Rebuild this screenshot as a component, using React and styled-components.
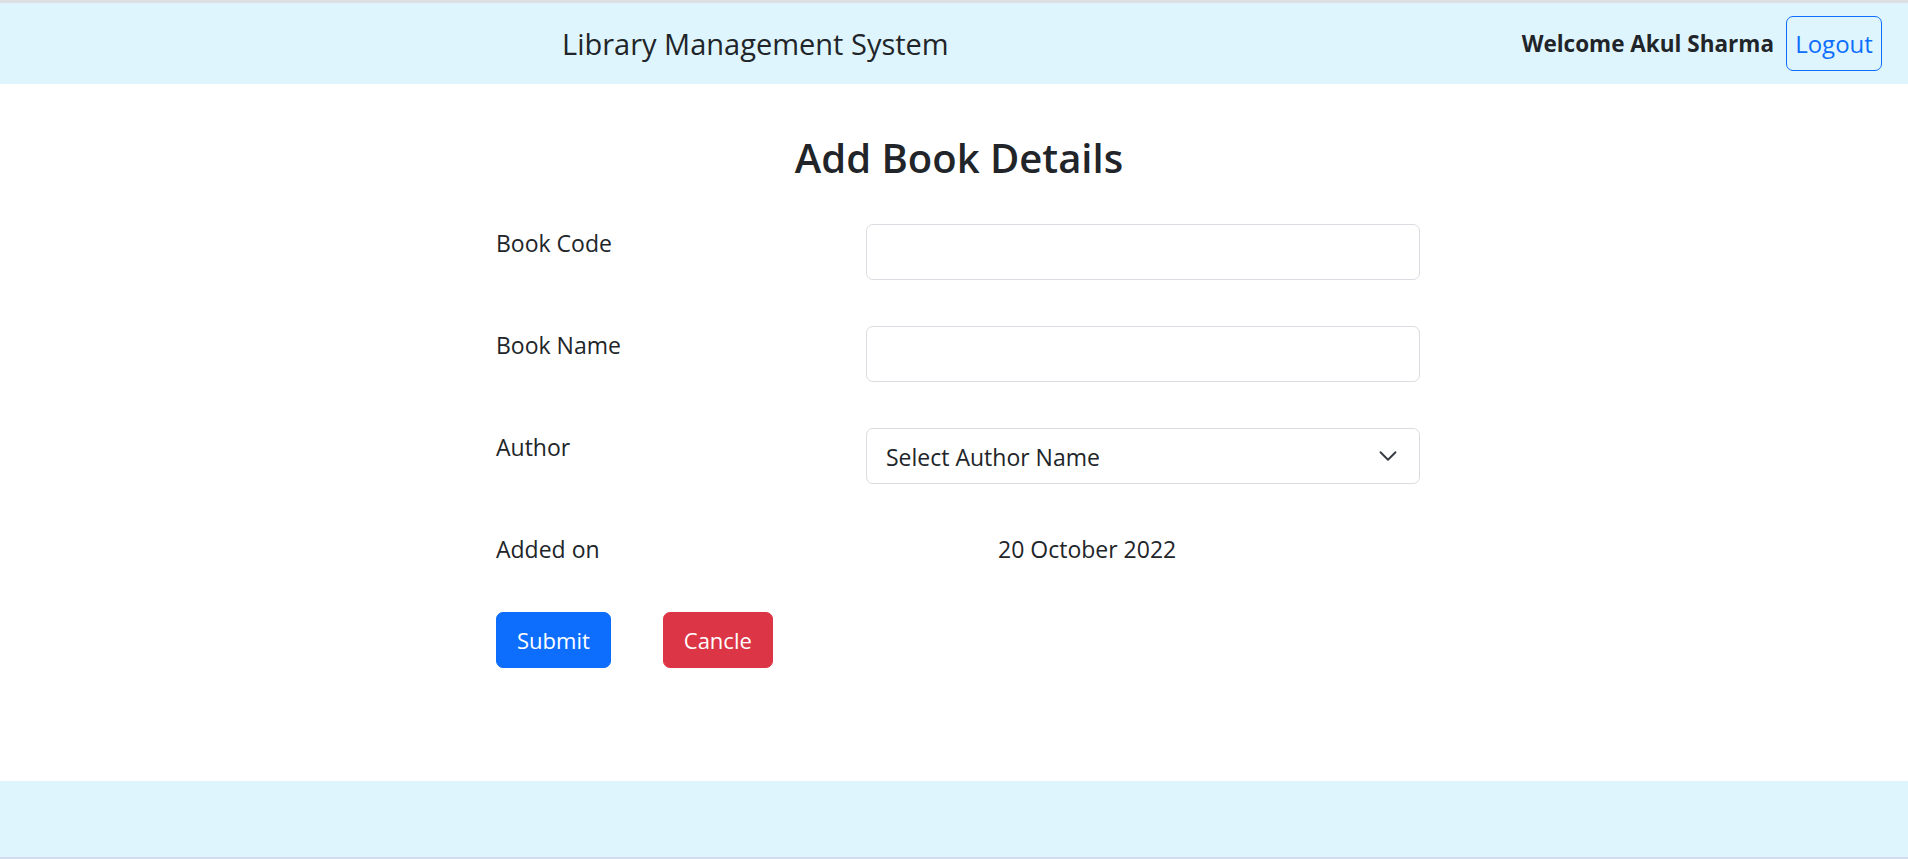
import { createGlobalStyle, styled } from 'styled-components';

const GlobalStyle = createGlobalStyle`
  * {
    box-sizing: border-box;
  }

  body {
    margin: 0;
    font-family: 'Open Sans', 'Noto Sans', sans-serif;
    color: #212529;
    background: #fff;
  }
`;

function Chevron() {
  return (
    <svg width="20" height="20" viewBox="0 0 16 16" fill="none">
      <path
        d="m2 5 6 6 6-6"
        stroke="#343a40"
        strokeWidth="1.5"
        strokeLinecap="round"
        strokeLinejoin="round"
      />
    </svg>
  );
}

function App() {
  const fields = [
    { id: 'code', label: 'Book Code' },
    { id: 'name', label: 'Book Name' },
  ];

  return (
    <Page>
      <GlobalStyle />
      <Header>
        <Brand>Library Management System</Brand>
        <UserArea>
          <Welcome>Welcome Akul Sharma</Welcome>
          <OutlineButton type="button">Logout</OutlineButton>
        </UserArea>
      </Header>

      <Main>
        <Title>Add Book Details</Title>
        <Form onSubmit={(e) => e.preventDefault()}>
          {fields.map((field) => (
            <FormRow key={field.id}>
              <Label htmlFor={field.id}>{field.label}</Label>
              <Input id={field.id} type="text" />
            </FormRow>
          ))}

          <FormRow>
            <Label htmlFor="author">Author</Label>
            <SelectWrap>
              <Select id="author" defaultValue="">
                <option value="">Select Author Name</option>
              </Select>
              <Arrow>
                <Chevron />
              </Arrow>
            </SelectWrap>
          </FormRow>

          <FormRow>
            <Label as="span">Added on</Label>
            <DateText>20 October 2022</DateText>
          </FormRow>

          <Actions>
            <Button type="submit" $variant="primary">
              Submit
            </Button>
            <Button type="button" $variant="danger">
              Cancle
            </Button>
          </Actions>
        </Form>
      </Main>

      <Footer />
    </Page>
  );
}

const Page = styled.div`
  min-height: 100vh;
  display: flex;
  flex-direction: column;
  border-top: 3px solid #dcdfe2;
`;

const Header = styled.header`
  height: 81px;
  display: flex;
  align-items: center;
  padding: 0 26px 0 562px;
  background: #dff5fd;
`;

const Brand = styled.div`
  font-size: 29px;
  font-weight: 400;
  color: #212529;
`;

const UserArea = styled.div`
  margin-left: auto;
  display: flex;
  align-items: center;
  gap: 12px;
`;

const Welcome = styled.span`
  font-size: 22.5px;
  font-weight: 700;
  color: #212529;
`;

const OutlineButton = styled.button`
  height: 55px;
  width: 96px;
  padding: 0;
  font-family: inherit;
  font-size: 24px;
  color: #0d6efd;
  background: transparent;
  border: 1px solid #0d6efd;
  border-radius: 7px;
  cursor: pointer;
`;

const Main = styled.main`
  flex: 1;
  background: #fff;
`;

const Title = styled.h2`
  margin: 50px 0 42px;
  padding-left: 10px;
  text-align: center;
  font-size: 40px;
  font-weight: 600;
  line-height: 48px;
  color: #212529;
`;

const Form = styled.form`
  width: 932px;
  margin: 0 auto;
  padding-left: 8px;
  display: grid;
  grid-template-columns: 370px 554px;
  row-gap: 46px;
`;

const FormRow = styled.div`
  display: contents;
`;

const Label = styled.label`
  padding-top: 3px;
  font-size: 23px;
  line-height: 33px;
  color: #212529;
`;

const fieldBox = `
  width: 100%;
  height: 56px;
  padding: 2px 19px 0;
  font-family: inherit;
  font-size: 23px;
  color: #212529;
  background: #fff;
  border: 1px solid #d9dce0;
  border-radius: 7px;
  outline: none;
`;

const Input = styled.input`
  ${fieldBox}
`;

const SelectWrap = styled.div`
  position: relative;
`;

const Select = styled.select`
  ${fieldBox}
  appearance: none;
  padding-right: 56px;
`;

const Arrow = styled.span`
  position: absolute;
  right: 22px;
  top: 50%;
  transform: translateY(-50%);
  display: flex;
  pointer-events: none;
`;

const DateText = styled.span`
  padding: 3px 0 0 132px;
  font-size: 23px;
  line-height: 33px;
  color: #212529;
`;

const Actions = styled.div`
  grid-column: 1 / -1;
  display: flex;
  gap: 52px;
`;

const Button = styled.button`
  height: 56px;
  padding: 0 20px;
  font-family: inherit;
  font-size: 22px;
  color: #fff;
  background: ${({ $variant }) => ($variant === 'danger' ? '#dc3545' : '#0d6efd')};
  border: 1px solid ${({ $variant }) => ($variant === 'danger' ? '#dc3545' : '#0d6efd')};
  border-radius: 7px;
  cursor: pointer;
`;

const Footer = styled.footer`
  height: 78px;
  background: #dff5fd;
  border-bottom: 2px solid #d3dcec;
`;

export default App;
